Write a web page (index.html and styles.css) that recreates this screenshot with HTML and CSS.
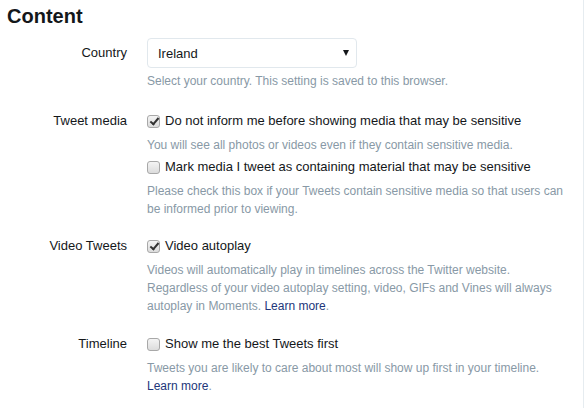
FILE: index.html
```html
<!DOCTYPE html>
<html>
<head>
<meta charset="utf-8">
<link rel="stylesheet" href="styles.css">
</head>
<body>
<div class="panel">
  <h2 class="title">Content</h2>

  <div class="row row-country">
    <div class="label label-select">Country</div>
    <div class="controls">
      <div class="select">
        <span>Ireland</span>
        <span class="caret"></span>
      </div>
      <p class="help">Select your country. This setting is saved to this browser.</p>
    </div>
  </div>

  <div class="row row-after-country">
    <div class="label">Tweet media</div>
    <div class="controls">
      <label class="check"><span class="box checked"></span>Do not inform me before showing media that may be sensitive</label>
      <p class="help">You will see all photos or videos even if they contain sensitive media.</p>
      <label class="check"><span class="box"></span>Mark media I tweet as containing material that may be sensitive</label>
      <p class="help">Please check this box if your Tweets contain sensitive media so that users can be informed prior to viewing.</p>
    </div>
  </div>

  <div class="row">
    <div class="label">Video Tweets</div>
    <div class="controls">
      <label class="check"><span class="box checked"></span>Video autoplay</label>
      <p class="help">Videos will automatically play in timelines across the Twitter website. Regardless of your video autoplay setting, video, GIFs and Vines will always autoplay in Moments. <a class="link">Learn more</a>.</p>
    </div>
  </div>

  <div class="row row-last">
    <div class="label">Timeline</div>
    <div class="controls">
      <label class="check"><span class="box"></span>Show me the best Tweets first</label>
      <p class="help">Tweets you are likely to care about most will show up first in your timeline. <a class="link">Learn more</a>.</p>
    </div>
  </div>
</div>
</body>
</html>
```

FILE: styles.css
```css
html, body {
  margin: 0;
  padding: 0;
  background: #fff;
}
body {
  font-family: "Liberation Sans", Arial, sans-serif;
  color: #14171a;
  width: 585px;
  height: 408px;
  overflow: hidden;
}
.panel {
  width: 583px;
  height: 408px;
  border-right: 1px solid #e6ecf0;
  box-sizing: content-box;
}
.title {
  margin: 0;
  padding: 5px 0 0 7px;
  font-size: 20px;
  line-height: 23px;
  font-weight: bold;
  color: #14171a;
}
.row {
  display: flex;
  margin-top: 18px;
}
.row-country {
  margin-top: 10px;
}
.row-after-country {
  margin-top: 21px;
}
.row-last {
  margin-top: 19px;
}
.label {
  flex: none;
  width: 147px;
  text-align: right;
  font-size: 13px;
  line-height: 20px;
  padding-right: 20px;
  box-sizing: border-box;
  color: #14171a;
}
.label-select {
  padding-top: 5px;
}
.controls {
  flex: 1;
  padding-right: 10px;
}
.select {
  width: 210px;
  height: 30px;
  box-sizing: border-box;
  border: 1px solid #e1e8ed;
  border-radius: 4px;
  display: flex;
  align-items: center;
  justify-content: space-between;
  padding: 0 7px 0 10px;
  font-size: 13px;
  color: #14171a;
}
.caret {
  width: 0;
  height: 0;
  border-left: 3.5px solid transparent;
  border-right: 3.5px solid transparent;
  border-top: 6px solid #14171a;
}
.help {
  margin: 4px 0 0 0;
  font-size: 12px;
  line-height: 18px;
  color: #8899a6;
}
.check + .help {
  margin-top: 5px;
}
.help + .check {
  margin-top: 3px;
}
.check {
  display: flex;
  align-items: center;
  font-size: 13px;
  line-height: 20px;
  color: #14171a;
}
.box {
  width: 13px;
  height: 13px;
  box-sizing: border-box;
  border: 1px solid #a8a8a8;
  border-radius: 3px;
  background: linear-gradient(#f4f4f4, #dcdcdc);
  margin-right: 5px;
  flex: none;
  position: relative;
}
.box.checked::after {
  content: "";
  position: absolute;
  left: 3.5px;
  top: 0.5px;
  width: 3px;
  height: 7px;
  border: solid #333;
  border-width: 0 2px 2px 0;
  transform: rotate(40deg);
}
.link {
  color: #22367a;
  text-decoration: none;
}
```
